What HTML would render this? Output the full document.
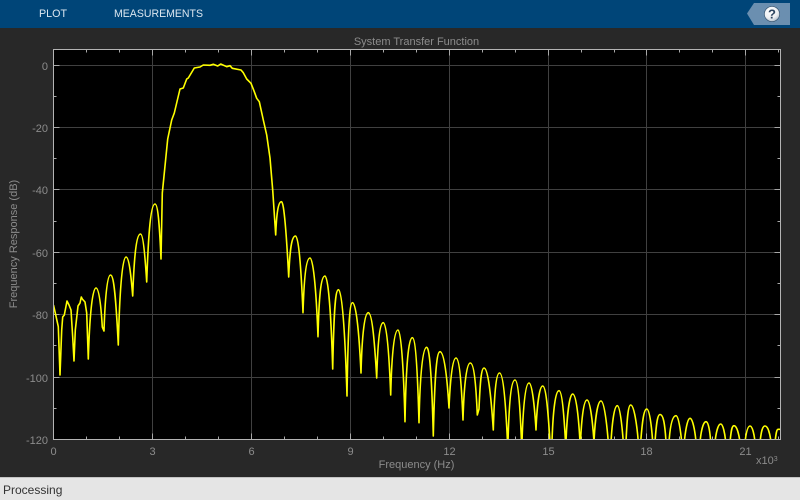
<!DOCTYPE html>
<html><head><meta charset="utf-8"><title>System Transfer Function</title>
<style>
html,body{margin:0;padding:0;width:800px;height:500px;overflow:hidden;background:#282828}
svg{display:block;position:absolute;left:0;top:0}
text{font-family:"Liberation Sans",sans-serif}
</style></head><body>
<svg width="800" height="500" viewBox="0 0 800 500" xmlns="http://www.w3.org/2000/svg">
<defs>
<clipPath id="c"><rect x="53" y="50" width="727" height="389.5"/></clipPath>
<radialGradient id="h" cx="0.4" cy="0.3" r="0.8"><stop offset="0" stop-color="#fff"/><stop offset="0.6" stop-color="#eceff2"/><stop offset="1" stop-color="#9fb0c0"/></radialGradient>
</defs>
<rect width="800" height="500" fill="#282828"/>
<rect width="800" height="28" fill="#004578"/>
<text x="39" y="17" font-size="11" fill="#dce7f0" textLength="28" lengthAdjust="spacingAndGlyphs">PLOT</text>
<text x="114" y="17" font-size="11" fill="#dce7f0" textLength="89" lengthAdjust="spacingAndGlyphs">MEASUREMENTS</text>
<polygon points="747,13.5 754,3 790,3 790,25 754,25" fill="#6b8fb0"/>
<circle cx="772" cy="14" r="7.6" fill="url(#h)" stroke="#33506b" stroke-width="0.6"/>
<text x="772" y="18.5" font-size="13" font-weight="bold" text-anchor="middle" fill="#2d4560">?</text>

<rect x="53.5" y="49.5" width="727" height="390" fill="#000"/>
<g stroke="#404040" stroke-width="1" fill="none">
<path d="M152.5 50V439M251.5 50V439M350.5 50V439M449.5 50V439M548.5 50V439M646.5 50V439M745.5 50V439"/>
<path d="M54 65.5H780M54 127.5H780M54 189.5H780M54 252.5H780M54 314.5H780M54 377.5H780"/>
</g>
<g stroke="#a8a8a8" stroke-width="1" fill="none">
<path d="M53.5 65.5h6M53.5 127.5h6M53.5 189.5h6M53.5 252.5h6M53.5 314.5h6M53.5 377.5h6M780.5 65.5h-6M780.5 127.5h-6M780.5 189.5h-6M780.5 252.5h-6M780.5 314.5h-6M780.5 377.5h-6"/>
<path d="M53.5 96.5h3M53.5 158.5h3M53.5 221.5h3M53.5 283.5h3M53.5 345.5h3M53.5 408.5h3M780.5 96.5h-3M780.5 158.5h-3M780.5 221.5h-3M780.5 283.5h-3M780.5 345.5h-3M780.5 408.5h-3"/>
<path d="M152.5 439.5v-6M251.5 439.5v-6M350.5 439.5v-6M449.5 439.5v-6M548.5 439.5v-6M646.5 439.5v-6M745.5 439.5v-6M152.5 49.5v6M251.5 49.5v6M350.5 49.5v6M449.5 49.5v6M548.5 49.5v6M646.5 49.5v6M745.5 49.5v6"/>
<path d="M86.5 439.5v-3M119.5 439.5v-3M185.5 439.5v-3M218.5 439.5v-3M284.5 439.5v-3M317.5 439.5v-3M383.5 439.5v-3M416.5 439.5v-3M482.5 439.5v-3M515.5 439.5v-3M581.5 439.5v-3M614.5 439.5v-3M679.5 439.5v-3M712.5 439.5v-3M778.5 439.5v-3M86.5 49.5v3M119.5 49.5v3M185.5 49.5v3M218.5 49.5v3M284.5 49.5v3M317.5 49.5v3M383.5 49.5v3M416.5 49.5v3M482.5 49.5v3M515.5 49.5v3M581.5 49.5v3M614.5 49.5v3M679.5 49.5v3M712.5 49.5v3M778.5 49.5v3"/>
</g>
<path clip-path="url(#c)" fill="none" stroke="#ffff00" stroke-width="1.6" stroke-linejoin="round" d="M53.5,305 L55,311.7 58.3,326.7 60,375 61.7,330 62.7,317 64.3,315 67,301 69,305 71,310 72.7,337 74,361 75.3,330 78,306 80,303 81.3,297 82.3,299 85,302 86.7,313 88.3,359
C89.5,320 92,288 96,288 C99,288 101,305 102.3,327 L104,331
C105,300 107,275 110.5,275 C114,275 116,300 118.3,345
C119.5,295 122,257 126,257 C129,257 131,275 132.7,296
C134,260 136,234 140.5,234 C143,234 145,255 146.7,282
C148,245 150,204 155,204 C158,204 159.5,225 161,259
L162.3,193 167.7,139 171.7,120 174.3,113 180,89 183.3,88 186.7,79 188.3,78 194.3,68 200,67 203.3,65 210,65.3 213.3,64.3 217.7,66 220.7,64 226.7,66.7 230,65.7 232.3,68.3 241,70 243.3,72.7 246.7,79 251,83.3 254.3,91.7 256.7,98.3 259.3,101.7 263.3,120 266.7,135 270,158 272.7,190 275.7,235
C276.5,215 278,201.7 281.5,201.7 C284,201.7 286.5,235 288.7,277
C289.8,250 291.5,236 295.5,236 C298.5,236 301,265 303,312.7
C304,280 306,258 310,258 C313,258 316,285 318,336.7
C319,295 321,276 325,276 C328,276 331,310 332.7,369
C333.8,315 335,289.7 338.5,289.7 C342,289.7 345,330 347,396
C348,330 349.5,302.7 352.5,302.7 C356,302.7 359,330 361,373
C362,335 364.5,312.7 368.3,312.7 C372,312.7 374.5,340 376.7,378
C377.7,345 379.5,322.7 383.3,322.7 C386.5,322.7 389,350 390.7,395
C391.7,355 394,330 398,330 C401,330 403.5,365 405,421.7
C406,365 408.5,337.7 412.3,337.7 C415.5,337.7 417.5,370 419,422.7
C420,375 422.5,347.3 426.7,347.3 C430,347.3 432,385 433.3,436
C434.5,385 436,351.7 440,351.7 C444,351.7 447,375 449,408
C450,385 452,358 456,358 C459.5,358 461.5,385 463,420
C464,385 466.5,363 470.3,363 C474,363 476,385 477.3,415
L479,409 C480,385 481,368 484,368 C488,368 491,395 493.3,430
C494.3,395 496,373 499.5,373 C503,373 505.5,400 507.5,442
L508,442 C509,405 511,380 515,380 C518,380 520,405 521.5,442
L522,442 C523,410 525,383 529,383 C532,383 534.5,405 536,430
C537,405 539.5,386 542.7,386 C546,386 548,410 550,442
L552,442 C553,410 555.5,390.7 559,390.7 C562,390.7 564,415 565.5,442
L566,442 C567,415 569.5,394 572.7,394 C576,394 578.5,415 580,442
L580.5,442 C581.5,420 583.5,400 587,400 C590,400 592.5,420 594,442
C595,420 597.5,401 601,401 C604,401 606.5,420 608.3,442
L611,442 C612,425 614,405.7 617.3,405.7 C620,405.7 622,425 623.3,442
L626,442 C627,420 628,405 630.7,405 C634,405 637,425 638.3,442
L640.7,442 C642,425 643.5,409 646.7,409 C649.5,409 651.5,425 652.7,442
L655,442 C656,428 657,414.5 660,414.5 C663.5,414.5 665,425 666,442
L669,442 C670,428 672,415.7 676,415.7 C678.5,415.7 680.5,430 681.7,442
L684.3,442 C685.5,430 687.5,418.3 690,418.3 C692.5,418.3 695,430 696,442
L700,442 C701,432 703,421.7 706,421.7 C708.5,421.7 710,432 710.7,442
L715,442 C716,433 718,424 720.7,424 C723,424 725,434 725.7,442
L730,442 C731,433 731.5,425.7 734,425.7 C737,425.7 739,435 740,442
L745,442 C746,434 747.5,426 750,426 C752.5,426 754.3,435 755,442
L760,442 C761,434 762,426 765,426 C768,426 770,434 771,442
L775,442 C776,434 776.5,429.5 778,429.3 L780,429.3"/>
<rect x="53.5" y="49.5" width="727" height="390" fill="none" stroke="#b4b4b4" stroke-width="1"/>

<g font-size="11" fill="#8c8c8c">
<text x="416.5" y="45" text-anchor="middle">System Transfer Function</text>
<text x="416.5" y="468" text-anchor="middle">Frequency (Hz)</text>
<text transform="translate(17,244) rotate(-90)" text-anchor="middle">Frequency Response (dB)</text>
<g text-anchor="end">
<text x="48" y="70">0</text>
<text x="48" y="132">-20</text>
<text x="48" y="194">-40</text>
<text x="48" y="257">-60</text>
<text x="48" y="319">-80</text>
<text x="48" y="382">-100</text>
<text x="48" y="444">-120</text>
</g>
<g text-anchor="middle">
<text x="53.5" y="455">0</text>
<text x="152.5" y="455">3</text>
<text x="251.5" y="455">6</text>
<text x="350.5" y="455">9</text>
<text x="449.5" y="455">12</text>
<text x="548.5" y="455">15</text>
<text x="646.5" y="455">18</text>
<text x="745.5" y="455">21</text>
</g>
<text x="756" y="464">x10<tspan font-size="7" dy="-3">3</tspan></text>
</g>
<rect x="0" y="477" width="800" height="23" fill="#e5e5e5"/>
<rect x="0" y="477" width="800" height="1" fill="#c4c4c4"/>
<text x="3" y="494" font-size="12" fill="#333">Processing</text>
</svg>
</body></html>
